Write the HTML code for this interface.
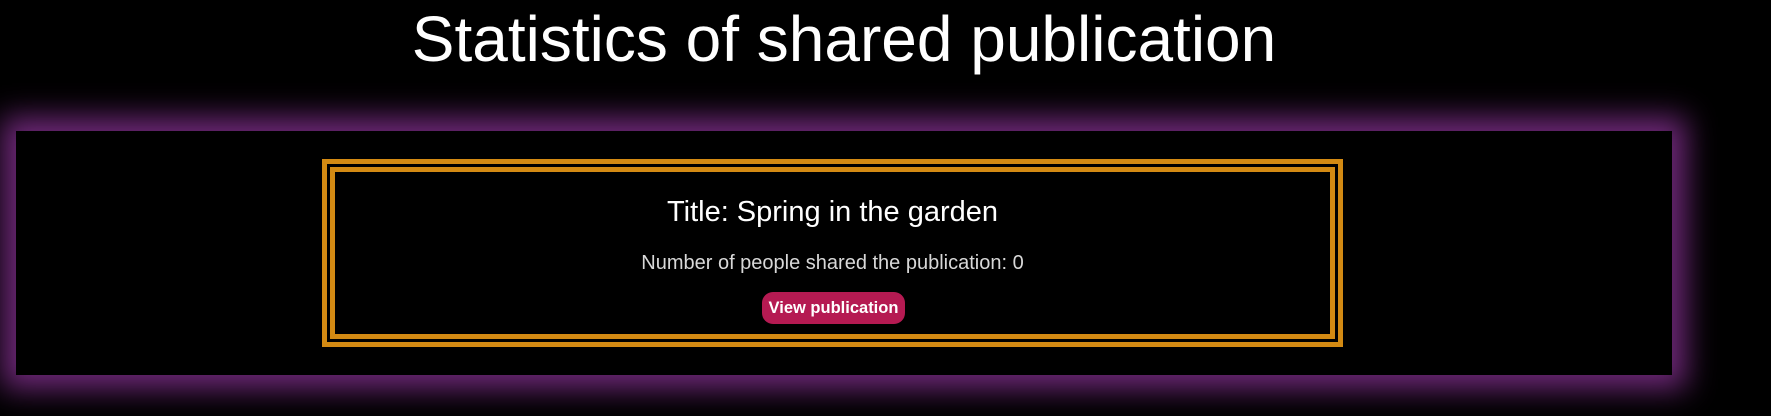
<!DOCTYPE html>
<html><head><style>
body{margin:0;width:1771px;height:416px;background:#000;overflow:hidden;font-family:"Liberation Sans",sans-serif;color:#fff}
h1{position:absolute;left:16px;width:1656px;top:2px;margin:0;text-align:center;font-size:64px;font-weight:normal;letter-spacing:0px}
.box{position:absolute;left:16px;top:131px;width:1656px;height:244px;background:#000;box-shadow:0 0 28px 14px rgba(110,40,120,1)}
.o{position:absolute;left:322px;top:159px;width:1011px;height:178px;border:5px solid #d38a13}
.i{position:absolute;left:3px;top:3px;right:3px;bottom:3px;border:5px solid #d38a13;text-align:center}
.t{position:absolute;left:0;right:0;top:24px;font-size:29px}
.n{position:absolute;left:0;right:0;top:80px;font-size:20px;color:#d8d8d8}
.b{position:absolute;left:427px;top:120px;width:143px;height:32px;border-radius:11px;background:#b51a52;font-size:16.5px;font-weight:bold;line-height:32px}
</style></head><body>
<h1>Statistics of shared publication</h1>
<div class="box"></div>
<div class="o"><div class="i">
<div class="t">Title: Spring in the garden</div>
<div class="n">Number of people shared the publication: 0</div>
<div class="b">View publication</div>
</div></div>
</body></html>
